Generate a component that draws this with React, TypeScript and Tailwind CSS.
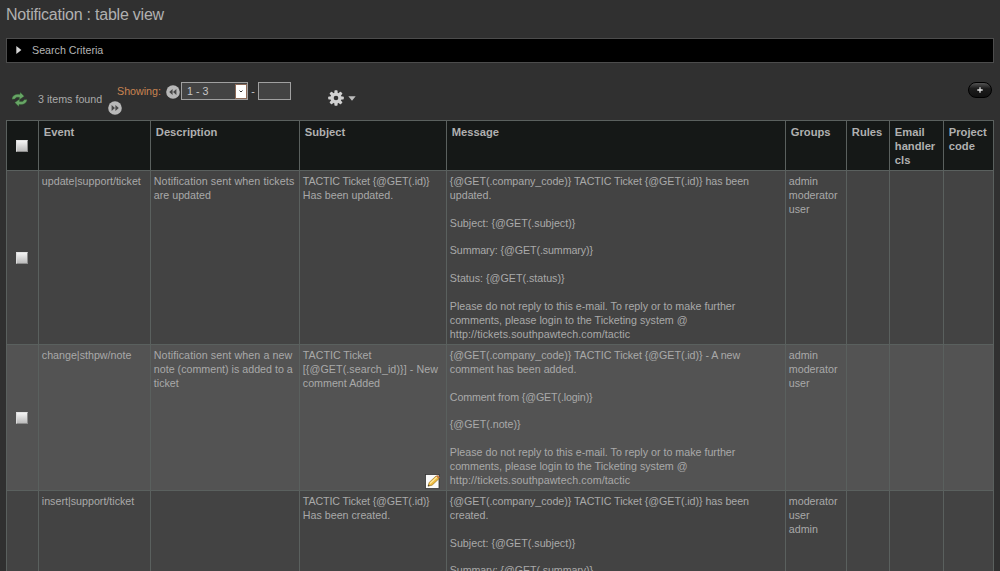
import type { ReactNode } from "react";

const LOGIN = [
  "Please do not reply to this e-mail. To reply or to make further",
  "comments, please login to the Ticketing system @",
  "http://tickets.southpawtech.com/tactic",
];

type Row = {
  event: string;
  description: string[];
  subject: string[];
  message: string[];
  groups: string[];
  height: string;
  tone: string;
  editable?: boolean;
};

const ROWS: Row[] = [
  {
    event: "update|support/ticket",
    description: ["Notification sent when tickets", "are updated"],
    subject: ["TACTIC Ticket {@GET(.id)}", "Has been updated."],
    message: [
      "{@GET(.company_code)} TACTIC Ticket {@GET(.id)} has been",
      "updated.",
      "",
      "Subject: {@GET(.subject)}",
      "",
      "Summary: {@GET(.summary)}",
      "",
      "Status: {@GET(.status)}",
      "",
      ...LOGIN,
    ],
    groups: ["admin", "moderator", "user"],
    height: "h-[174px]",
    tone: "bg-[#434343]",
  },
  {
    event: "change|sthpw/note",
    description: ["Notification sent when a new", "note (comment) is added to a", "ticket"],
    subject: ["TACTIC Ticket", "[{@GET(.search_id)}] - New", "comment Added"],
    message: [
      "{@GET(.company_code)} TACTIC Ticket {@GET(.id)} - A new",
      "comment has been added.",
      "",
      "Comment from {@GET(.login)}",
      "",
      "{@GET(.note)}",
      "",
      ...LOGIN,
    ],
    groups: ["admin", "moderator", "user"],
    height: "h-[146px]",
    tone: "bg-[#535353]",
    editable: true,
  },
  {
    event: "insert|support/ticket",
    description: [],
    subject: ["TACTIC Ticket {@GET(.id)}", "Has been created."],
    message: [
      "{@GET(.company_code)} TACTIC Ticket {@GET(.id)} has been",
      "created.",
      "",
      "Subject: {@GET(.subject)}",
      "",
      "Summary: {@GET(.summary)}",
    ],
    groups: ["moderator", "user", "admin"],
    height: "h-[174px]",
    tone: "bg-[#434343]",
  },
];

const HEADERS = [
  ["Event"],
  ["Description"],
  ["Subject"],
  ["Message"],
  ["Groups"],
  ["Rules"],
  ["Email", "handler", "cls"],
  ["Project", "code"],
];

const COLS = "grid grid-cols-[32px_112px_149px_147px_339px_61px_43px_54px_50px]";
const EDGE = "border-r border-b border-[#5a605e]";

function tracking(line: string) {
  if (line.startsWith("{@GET(.company")) return "tracking-[-0.055px]";
  if (line.startsWith("TACTIC Ticket {") || line.startsWith("Comment from")) return "tracking-[-0.13px]";
  if (line.startsWith("Summary")) return "tracking-[-0.1px]";
  if (line.startsWith("[{")) return "tracking-[0.08px]";
  if (line.startsWith("Notification") || line.startsWith("http")) return "tracking-[0.09px]";
  return "";
}

function Lines({ lines }: { lines: string[] }) {
  return (
    <>
      {lines.map((line, i) => (
        <div key={i} className={`h-[13.86px] whitespace-pre ${tracking(line)}`}>
          {line}
        </div>
      ))}
    </>
  );
}

function Cell({ children, className = "pt-[4.2px] pl-[2.8px]" }: { children?: ReactNode; className?: string }) {
  return <div className={`${EDGE} ${className}`}>{children}</div>;
}

function Check() {
  return (
    <span className="block size-[12px] border border-t-[#e4e4e4] border-l-[#dcdcdc] border-r-[#8c8c8c] border-b-[#8c8c8c] bg-linear-to-b from-[#f4f4f4] to-[#bcbcbc]" />
  );
}

function CheckCell() {
  return (
    <div className={`${EDGE} flex items-center justify-center pr-px`}>
      <Check />
    </div>
  );
}

function RefreshIcon() {
  return (
    <svg width="17" height="15" viewBox="0 0 17 15" fill="#68a566" stroke="#2c5a2c" strokeWidth=".4">
      <path d="M1 7.2C1.2 3.4 4.4 1.8 9 2.3L9.2.2l4 4.1L8.2 7.8l.3-2.4C5.9 4.9 4.4 5.4 4 7.1Z" />
      <path d="M16 7.6C15.8 11.4 12.6 13 8 12.5l-.2 2.1-4-4.1 5-3.5-.3 2.4c2.6.5 4.1 0 4.5-1.7Z" />
    </svg>
  );
}

function PageButton({ forward = false }: { forward?: boolean }) {
  return (
    <svg width="14" height="14" viewBox="0 0 14 14" className={forward ? "" : "-scale-x-100"}>
      <circle cx="7" cy="7" r="6.8" fill="#b8b8b8" />
      <path d="M3.6 3.9 7 7 3.6 10.1ZM7.4 3.9 10.8 7 7.4 10.1Z" fill="#484848" />
    </svg>
  );
}

function GearIcon() {
  return (
    <svg width="16" height="16" viewBox="0 0 16 16">
      <g fill="#d0d0d0">
        {[0, 45, 90, 135].map((a) => (
          <rect key={a} x="6.4" y=".2" width="3.2" height="15.6" rx=".8" transform={`rotate(${a} 8 8)`} />
        ))}
        <circle cx="8" cy="8" r="5.6" />
      </g>
      <circle cx="8" cy="8" r="2.3" fill="#303030" />
    </svg>
  );
}

function EditIcon() {
  return (
    <svg width="15" height="15" viewBox="0 0 15 15" className="absolute right-[6px] bottom-[1px]">
      <rect x=".5" y=".5" width="13.5" height="14" fill="#fafafa" stroke="#333" strokeWidth=".8" />
      <path d="M3 12.2 4.2 8.4 11 2l3 2.7-6.9 6.5Z" fill="#eebb3e" stroke="#8a6420" strokeWidth=".6" />
      <path d="m5 9.5 7-6.5" stroke="#ffe9a0" strokeWidth="1.1" />
      <path d="m11 2 1.2-1.1 2.6 2.3L14 4.7Z" fill="#c9793b" />
      <path d="m3 12.2.5-1.6 1.2 1.1Z" fill="#333" />
    </svg>
  );
}

export default function App() {
  return (
    <div className="h-[571px] w-[1000px] overflow-hidden bg-[#303030] px-[6px] font-['Liberation_Sans',Arial,sans-serif] text-[10.7px] leading-[13.88px] text-[#a9a9a9]">
      <h1 className="h-[38px] pt-[5px] text-[16px] leading-[20px] tracking-[-0.23px] text-[#b0b0b0]">
        Notification : table view
      </h1>

      <div className="flex h-[25px] w-[988px] items-center border border-[#4c4c4c] bg-black pl-[9px]">
        <svg width="6" height="8" viewBox="0 0 6 8" className="mb-px">
          <path d="M.3 0 5.4 4 .3 8Z" fill="#d6d6d6" />
        </svg>
        <span className="ml-[10px] text-[#b4b4b4]">Search Criteria</span>
      </div>

      <div className="flex h-[57px] items-start">
        <div className="mt-[29px] ml-[5px] w-[17px]">
          <RefreshIcon />
        </div>
        <span className="mt-[30px] ml-[10px] w-[70px] whitespace-nowrap">3 items found</span>
        <div className="w-[190px]">
          <div className="mt-[19px] flex h-[18px] items-center pl-[9px]">
            <span className="w-[49px] pt-px text-[#c98350]">Showing:</span>
            <div className="pt-[2px]">
              <PageButton />
            </div>
            <div className="ml-[1px] flex h-[18px] w-[67px] items-center justify-between border border-[#a0a0a0] bg-[#434343] pl-[5px]">
              <span className="pt-px text-[#c8c8c8]">1 - 3</span>
              <span className="flex h-[15px] w-[12px] items-center justify-center border border-[#8b6a58] bg-white">
                <svg width="4" height="3" viewBox="0 0 4 3" fill="none" stroke="#333">
                  <path d="m.5.5 1.5 1.5L3.5.5" />
                </svg>
              </span>
            </div>
            <span className="w-[10px] pt-px text-center text-[#c8c8c8]">-</span>
            <div className="h-[18px] w-[33px] border border-[#a0a0a0] bg-[#434343]" />
          </div>
          <div className="flex pt-px">
            <PageButton forward />
          </div>
        </div>
        <div className="mt-[27px] ml-[30px] flex items-center gap-[4px]">
          <GearIcon />
          <svg width="8" height="5" viewBox="0 0 8 5">
            <path d="M.3.3h7.4L4 4.8Z" fill="#bcbcbc" />
          </svg>
        </div>
        <div className="mt-[19px] mr-[2px] ml-auto flex h-[16px] w-[24px] items-center justify-center rounded-full border border-black bg-linear-to-b from-[#555] via-[#1c1c1c] via-40% to-[#111]">
          <svg width="6" height="6" viewBox="0 0 6 6">
            <path d="M3 .3v5.4M.3 3h5.4" stroke="#e4e4e4" strokeWidth="1.3" />
          </svg>
        </div>
      </div>

      <div className="w-[988px] border-t border-l border-[#5a605e]">
        <div className={`${COLS} h-[50px] bg-[#151817] text-[11.2px] font-bold text-[#b0b0b0]`}>
          <CheckCell />
          {HEADERS.map((h) => (
            <Cell key={h[0]} className="pt-[5px] pl-[4.8px]">
              <Lines lines={h} />
            </Cell>
          ))}
        </div>
        {ROWS.map((row) => (
          <div key={row.event} className={`${COLS} ${row.height} ${row.tone}`}>
            {row.event.startsWith("insert") ? <Cell /> : <CheckCell />}
            <Cell>{row.event}</Cell>
            <Cell>
              <Lines lines={row.description} />
            </Cell>
            <Cell className="relative pt-[4.2px] pl-[2.8px]">
              <Lines lines={row.subject} />
              {row.editable && <EditIcon />}
            </Cell>
            <Cell>
              <Lines lines={row.message} />
            </Cell>
            <Cell>
              <Lines lines={row.groups} />
            </Cell>
            <Cell />
            <Cell />
            <Cell />
          </div>
        ))}
      </div>
    </div>
  );
}
